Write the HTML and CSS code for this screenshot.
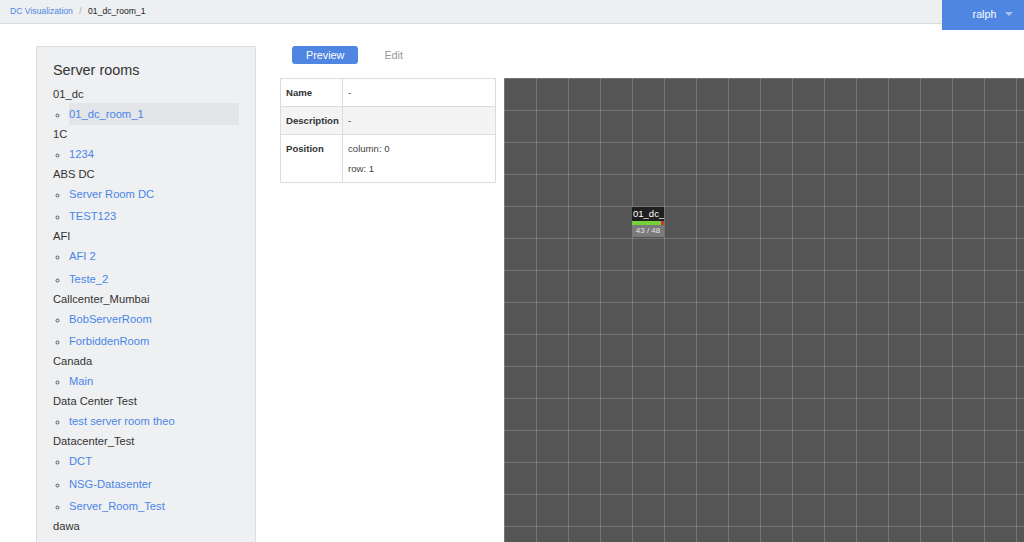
FILE: index.html
```html
<!DOCTYPE html>
<html>
<head>
<meta charset="utf-8">
<link rel="stylesheet" href="styles.css">
</head>
<body>
<header class="topbar">
  <nav class="crumbs">
    <a class="crumb-link" href="#">DC Visualization</a>
    <span class="crumb-sep">/</span>
    <span class="crumb-current">01_dc_room_1</span>
  </nav>
  <button class="user-btn">ralph <span class="caret"></span></button>
</header>
<div class="page">
  <aside class="sidebar">
    <h2 class="side-title">Server rooms</h2>
    <div class="group-name">01_dc</div>
    <ul class="rooms"><li><a class="active" href="#">01_dc_room_1</a></li></ul>
    <div class="group-name">1C</div>
    <ul class="rooms"><li><a href="#">1234</a></li></ul>
    <div class="group-name">ABS DC</div>
    <ul class="rooms"><li><a href="#">Server Room DC</a></li><li><a href="#">TEST123</a></li></ul>
    <div class="group-name">AFI</div>
    <ul class="rooms"><li><a href="#">AFI 2</a></li><li><a href="#">Teste_2</a></li></ul>
    <div class="group-name">Callcenter_Mumbai</div>
    <ul class="rooms"><li><a href="#">BobServerRoom</a></li><li><a href="#">ForbiddenRoom</a></li></ul>
    <div class="group-name">Canada</div>
    <ul class="rooms"><li><a href="#">Main</a></li></ul>
    <div class="group-name">Data Center Test</div>
    <ul class="rooms"><li><a href="#">test server room theo</a></li></ul>
    <div class="group-name">Datacenter_Test</div>
    <ul class="rooms"><li><a href="#">DCT</a></li><li><a href="#">NSG-Datasenter</a></li><li><a href="#">Server_Room_Test</a></li></ul>
    <div class="group-name">dawa</div>
  </aside>
  <main class="main">
    <div class="tabs">
      <button class="tab tab-active">Preview</button>
      <button class="tab">Edit</button>
    </div>
    <div class="content">
      <table class="info">
        <colgroup><col class="col-key"><col class="col-val"></colgroup>
        <tr><th>Name</th><td>-</td></tr>
        <tr class="alt"><th>Description</th><td>-</td></tr>
        <tr><th>Position</th><td><div class="pos">column: 0</div><div class="pos">row: 1</div></td></tr>
      </table>
      <div class="grid">
        <div class="node" style="left:128px;top:129px">
          <div class="node-label">01_dc_room_1</div>
          <div class="node-bar"><span class="node-fill" style="width:29px"></span></div>
          <div class="node-count">43 / 48</div>
        </div>
      </div>
    </div>
  </main>
</div>
</body>
</html>
```

FILE: styles.css
```css
html, body {
  margin: 0;
  padding: 0;
  overflow: hidden;
  background: #fff;
  font-family: "Liberation Sans", Arial, sans-serif;
  color: #333;
}

.topbar {
  display: flex;
  align-items: flex-start;
  justify-content: space-between;
  height: 23px;
  background: #eeeff1;
  border-bottom: 1px solid #dcdcdc;
}

.crumbs {
  padding-left: 10px;
  line-height: 22px;
  font-size: 8.6px;
}

.crumb-link {
  color: #4a86e8;
  text-decoration: none;
}

.crumb-sep {
  color: #aaa;
  margin: 0 4px;
}

.crumb-current {
  color: #222;
}

.user-btn {
  width: 82px;
  height: 30px;
  margin: 0;
  border: none;
  background: #4f86e2;
  color: #fff;
  font-family: inherit;
  font-size: 10.7px;
  padding: 0 0 2px 20px;
  display: flex;
  align-items: center;
  justify-content: center;
  gap: 9px;
}

.caret {
  width: 0;
  height: 0;
  border-left: 4px solid transparent;
  border-right: 4px solid transparent;
  border-top: 4px solid #a8c3ef;
}

.page {
  display: flex;
  gap: 24px;
  padding: 22px 0 0 36px;
}

.sidebar {
  flex: 0 0 auto;
  width: 186px;
  background: #eef0f2;
  border: 1px solid #dcdde0;
  padding: 14px 16px 20px 16px;
  font-size: 11.2px;
  min-height: 520px;
}

.side-title {
  margin: 0 0 5px 0;
  font-size: 14.4px;
  font-weight: normal;
  line-height: 18px;
  color: #333;
}

.group-name {
  line-height: 20px;
  color: #333;
}

.rooms {
  list-style: circle;
  margin: 0;
  padding-left: 16px;
  color: #555;
}

.rooms li {
  line-height: 20px;
}

.rooms li + li {
  margin-top: 2.4px;
}

.rooms a {
  display: block;
  color: #4a86e8;
  text-decoration: none;
}

.rooms a.active {
  background: #e3e5e9;
  padding: 1px 0;
  margin: -1px 0;
}

.main {
  flex: 1 1 auto;
  min-width: 0;
}

.tabs {
  display: flex;
  gap: 12px;
  padding-left: 12px;
  margin-bottom: 14px;
}

.tab {
  height: 18px;
  padding: 0 14px;
  border: none;
  border-radius: 3px;
  background: transparent;
  color: #999;
  font-family: inherit;
  font-size: 10.8px;
  line-height: 18px;
}

.tab-active {
  background: #4f86e2;
  color: #fff;
}

.content {
  display: flex;
  align-items: flex-start;
  gap: 8px;
}

.info {
  flex: 0 0 auto;
  width: 216px;
  table-layout: fixed;
  border-collapse: collapse;
  font-size: 9.6px;
}

.col-key {
  width: 62px;
}

.info th, .info td {
  border: 1px solid #dcdcdc;
  text-align: left;
  vertical-align: top;
  padding: 9px 5px 8px 5px;
  line-height: 10px;
  white-space: nowrap;
}

.info th {
  font-weight: bold;
  color: #333;
}

.info td {
  color: #444;
}

.info tr.alt {
  background: #f4f4f4;
}

.pos + .pos {
  margin-top: 10px;
}

.grid {
  position: relative;
  flex: 0 0 auto;
  width: 640px;
  height: 480px;
  background-color: #555;
  background-image:
    linear-gradient(to right, rgba(255,255,255,0.18) 1px, transparent 1px),
    linear-gradient(to bottom, rgba(255,255,255,0.18) 1px, transparent 1px);
  background-size: 32px 32px;
}

.node {
  position: absolute;
  width: 32px;
}

.node-label {
  background: #1f1f1f;
  color: #fff;
  font-size: 9.5px;
  line-height: 14px;
  height: 14px;
  overflow: hidden;
  white-space: nowrap;
  padding-left: 1px;
}

.node-bar {
  height: 4px;
  background: #d0312d;
  display: flex;
}

.node-fill {
  display: block;
  height: 4px;
  background: #75d13b;
}

.node-count {
  background: #7a7a7a;
  color: #e4e4e4;
  font-size: 8px;
  line-height: 12px;
  text-align: center;
}
```
